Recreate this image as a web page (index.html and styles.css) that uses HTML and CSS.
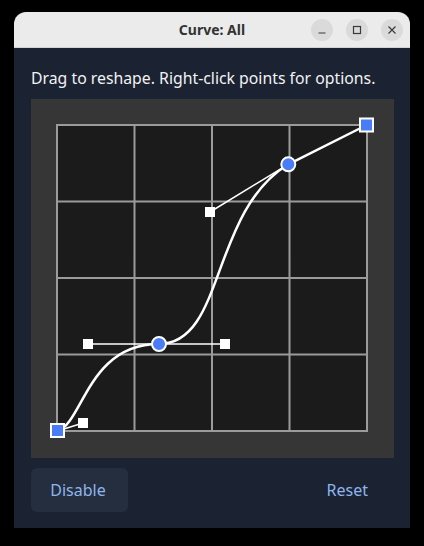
FILE: index.html
```html
<!DOCTYPE html>
<html lang="en">
<head>
<meta charset="utf-8">
<title>Curve: All</title>
<link rel="stylesheet" href="styles.css">
</head>
<body>
<div class="window">
  <header class="titlebar">
    <span class="title">Curve: All</span>
    <div class="controls">
      <button class="ctl" aria-label="Minimize">
        <svg width="10" height="10" viewBox="0 0 10 10"><path d="M1.5 8h7" stroke="#3a3a3a" stroke-width="1.2"/></svg>
      </button>
      <button class="ctl" aria-label="Maximize">
        <svg width="10" height="10" viewBox="0 0 10 10"><rect x="1.5" y="1.5" width="7" height="7" fill="none" stroke="#3a3a3a" stroke-width="1.2"/></svg>
      </button>
      <button class="ctl" aria-label="Close">
        <svg width="10" height="10" viewBox="0 0 10 10"><path d="M1.5 1.5l7 7M8.5 1.5l-7 7" stroke="#3a3a3a" stroke-width="1.2"/></svg>
      </button>
    </div>
  </header>
  <main class="content">
    <p class="hint">Drag to reshape. Right-click points for options.</p>
    <div class="canvas">
      <svg class="curve" width="363" height="359" viewBox="0 0 363 359">
        <rect x="26" y="26" width="310" height="306" fill="#1b1b1b"/>
        <g stroke="#9b9b9b" stroke-width="2" fill="none">
          <rect x="26" y="26" width="310" height="306"/>
          <path d="M103.5 26V332M181 26V332M258.5 26V332M26 102.5H336M26 179H336M26 255.5H336"/>
        </g>
        <g stroke="#ffffff" stroke-width="1.5" fill="none">
          <path d="M26.5 332L52 324"/>
          <path d="M57 245H194"/>
          <path d="M179 113L257.3 65.3"/>
        </g>
        <path d="M26.5 332C52 324 57 245 128 245C194 245 179 113 257.3 65.3L335.7 26" stroke="#ffffff" stroke-width="2.5" fill="none"/>
        <g fill="#ffffff">
          <rect x="47" y="319" width="10" height="10"/>
          <rect x="52" y="240" width="10" height="10"/>
          <rect x="189" y="240" width="10" height="10"/>
          <rect x="174" y="108" width="10" height="10"/>
        </g>
        <g fill="#4a7cf7" stroke="#ffffff" stroke-width="2">
          <rect x="20" y="325" width="13" height="13"/>
          <circle cx="128" cy="245" r="7"/>
          <circle cx="257.3" cy="65.3" r="7"/>
          <rect x="329" y="19.5" width="13" height="13"/>
        </g>
      </svg>
    </div>
    <div class="actions">
      <button class="btn btn-filled">Disable</button>
      <button class="btn btn-flat">Reset</button>
    </div>
  </main>
</div>
</body>
</html>
```
FILE: styles.css
```css
html, body {
  margin: 0;
  padding: 0;
  background: #000000;
}
body {
  padding: 12px 14px 0 14px;
  font-family: "Noto Sans", "Open Sans", sans-serif;
}
.window {
  width: 396px;
  border-radius: 12px 12px 0 0;
  overflow: hidden;
}
.titlebar {
  position: relative;
  height: 35px;
  background: #ebebeb;
  border-bottom: 1px solid #d2d2d2;
  display: flex;
  align-items: center;
  justify-content: center;
}
.title {
  font-size: 14px;
  font-weight: 700;
  color: #333333;
}
.controls {
  position: absolute;
  right: 7px;
  top: 7px;
  display: flex;
  gap: 13px;
}
.ctl {
  width: 22px;
  height: 22px;
  border-radius: 50%;
  border: none;
  background: #dadada;
  padding: 0;
  display: flex;
  align-items: center;
  justify-content: center;
}
.content {
  background: #1b2232;
  padding: 20px 16px 16px 17px;
  display: flex;
  flex-direction: column;
}
.hint {
  margin: 0;
  height: 20px;
  line-height: 20px;
  font-size: 15.8px;
  color: #f2f2f2;
  white-space: nowrap;
}
.canvas {
  margin-top: 11px;
  width: 363px;
  height: 359px;
  background: #363636;
}
.curve {
  display: block;
}
.actions {
  margin-top: 10px;
  display: flex;
  justify-content: space-between;
  width: 363px;
}
.btn {
  width: 97px;
  height: 44px;
  border: none;
  border-radius: 6px;
  font-family: "Noto Sans", "Open Sans", sans-serif;
  font-size: 16px;
  color: #8fb5ec;
  padding: 0;
}
.btn-filled {
  background: #252e3f;
  padding-right: 3px;
}
.btn-flat {
  background: transparent;
  text-align: right;
  padding-right: 26px;
}
```
